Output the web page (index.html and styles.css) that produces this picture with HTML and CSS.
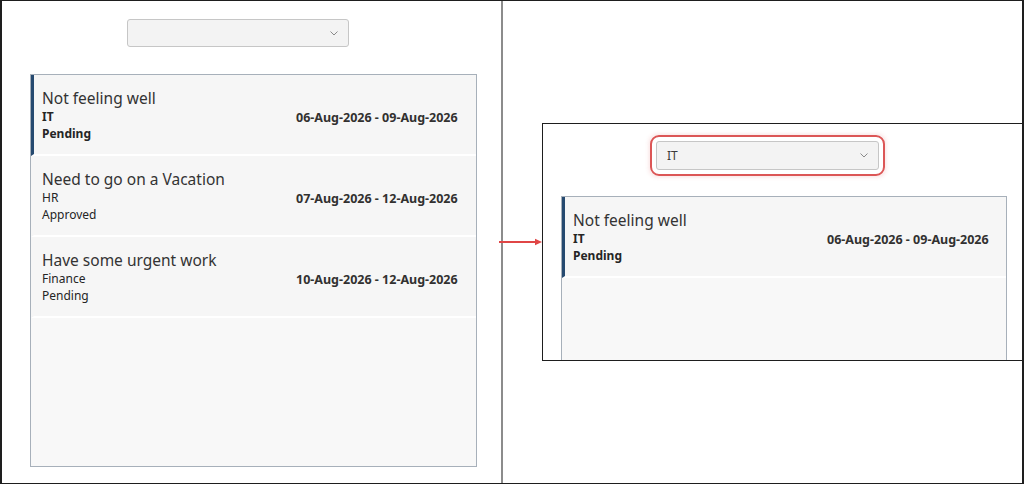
FILE: index.html
```html
<!DOCTYPE html>
<html lang="en">
<head>
<meta charset="utf-8">
<title>Leave requests filter</title>
<link rel="stylesheet" href="styles.css">
</head>
<body>
<div class="frame">
  <section class="panel">
    <div class="dropdown">
      <span class="dd-value"></span>
      <svg class="chev" width="8" height="5" viewBox="0 0 8 5"><path d="M0.5 0.5 L4 4 L7.5 0.5" fill="none" stroke="#8a8a8a" stroke-width="1"/></svg>
    </div>
    <div class="list">
      <div class="item selected">
        <div class="info">
          <div class="title">Not feeling well</div>
          <div class="sub">IT</div>
          <div class="sub">Pending</div>
        </div>
        <div class="dates">06-Aug-2026 - 09-Aug-2026</div>
      </div>
      <div class="item">
        <div class="info">
          <div class="title">Need to go on a Vacation</div>
          <div class="sub">HR</div>
          <div class="sub">Approved</div>
        </div>
        <div class="dates">07-Aug-2026 - 12-Aug-2026</div>
      </div>
      <div class="item">
        <div class="info">
          <div class="title">Have some urgent work</div>
          <div class="sub">Finance</div>
          <div class="sub">Pending</div>
        </div>
        <div class="dates">10-Aug-2026 - 12-Aug-2026</div>
      </div>
    </div>
  </section>

  <section class="after">
    <div class="shot">
      <div class="dropdown highlighted">
        <span class="dd-value">IT</span>
        <svg class="chev" width="8" height="5" viewBox="0 0 8 5"><path d="M0.5 0.5 L4 4 L7.5 0.5" fill="none" stroke="#8a8a8a" stroke-width="1"/></svg>
      </div>
      <div class="list">
        <div class="item selected">
          <div class="info">
            <div class="title">Not feeling well</div>
            <div class="sub">IT</div>
            <div class="sub">Pending</div>
          </div>
          <div class="dates">06-Aug-2026 - 09-Aug-2026</div>
        </div>
      </div>
    </div>
  </section>

  <svg class="arrow" width="44" height="8" viewBox="0 0 44 8"><path d="M0 4 H38" stroke="#e04646" stroke-width="2"/><path d="M36 0.8 L43 4 L36 7.2 Z" fill="#e04646"/></svg>
</div>
</body>
</html>
```

FILE: styles.css
```css
* { box-sizing: border-box; }

html, body {
  margin: 0;
  padding: 0;
  background: #ffffff;
}

body {
  font-family: "Noto Sans", "Open Sans", sans-serif;
  color: #323130;
}

.frame {
  position: relative;
  width: 1024px;
  height: 484px;
  border: 1px solid #1e1e1e;
  border-left-width: 2px;
  border-right-width: 2px;
  display: flex;
  overflow: hidden;
}

.panel {
  width: 501px;
  flex: none;
  border-right: 2px solid #8c8c8c;
  padding: 18px 0 0 28px;
}

.dropdown {
  position: relative;
  width: 222px;
  height: 28px;
  margin-left: 97px;
  background: #f3f3f3;
  border: 1px solid #c6c6c6;
  border-radius: 3px;
  display: flex;
  align-items: center;
  padding: 0 10px;
}

.dd-value {
  flex: 1;
  font-size: 12px;
  color: #3b3b3b;
}

.chev {
  flex: none;
}

.list {
  margin-top: 27px;
  width: 447px;
  height: 393px;
  background: #f8f8f8;
  border: 1px solid #a7b0ba;
}

.item {
  display: grid;
  grid-template-columns: 254px auto;
  align-items: center;
  padding: 12px 0 12px 8px;
  border-left: 3px solid transparent;
  border-bottom: 2px solid #ffffff;
  background: #f6f6f6;
  height: 81px;
}

.item.selected {
  border-left-color: #264a70;
}

.title {
  font-size: 15.5px;
  line-height: 20px;
  color: #333333;
}

.sub {
  font-size: 12px;
  line-height: 17px;
  color: #252525;
}

.selected .sub {
  font-weight: 700;
}

.dates {
  font-size: 12.5px;
  font-weight: 700;
  color: #323130;
  margin-top: 5px;
}

.after {
  flex: 1;
  padding: 122px 0 0 39px;
}

.shot {
  height: 238px;
  border: 1px solid #1e1e1e;
  border-right: none;
  overflow: hidden;
  padding: 17px 0 0 18px;
}

.shot .dropdown {
  width: 223px;
  height: 29px;
  margin-left: 95px;
}

.highlighted {
  outline: 2px solid #dc5656;
  outline-offset: 4px;
  box-shadow: 0 0 0 6px rgba(255,255,255,1), 0 0 4px 7px rgba(220,86,86,0.18);
}

.shot .list {
  margin-top: 26px;
  width: 446px;
  height: 300px;
}

.arrow {
  position: absolute;
  left: 497px;
  top: 237px;
}
```
